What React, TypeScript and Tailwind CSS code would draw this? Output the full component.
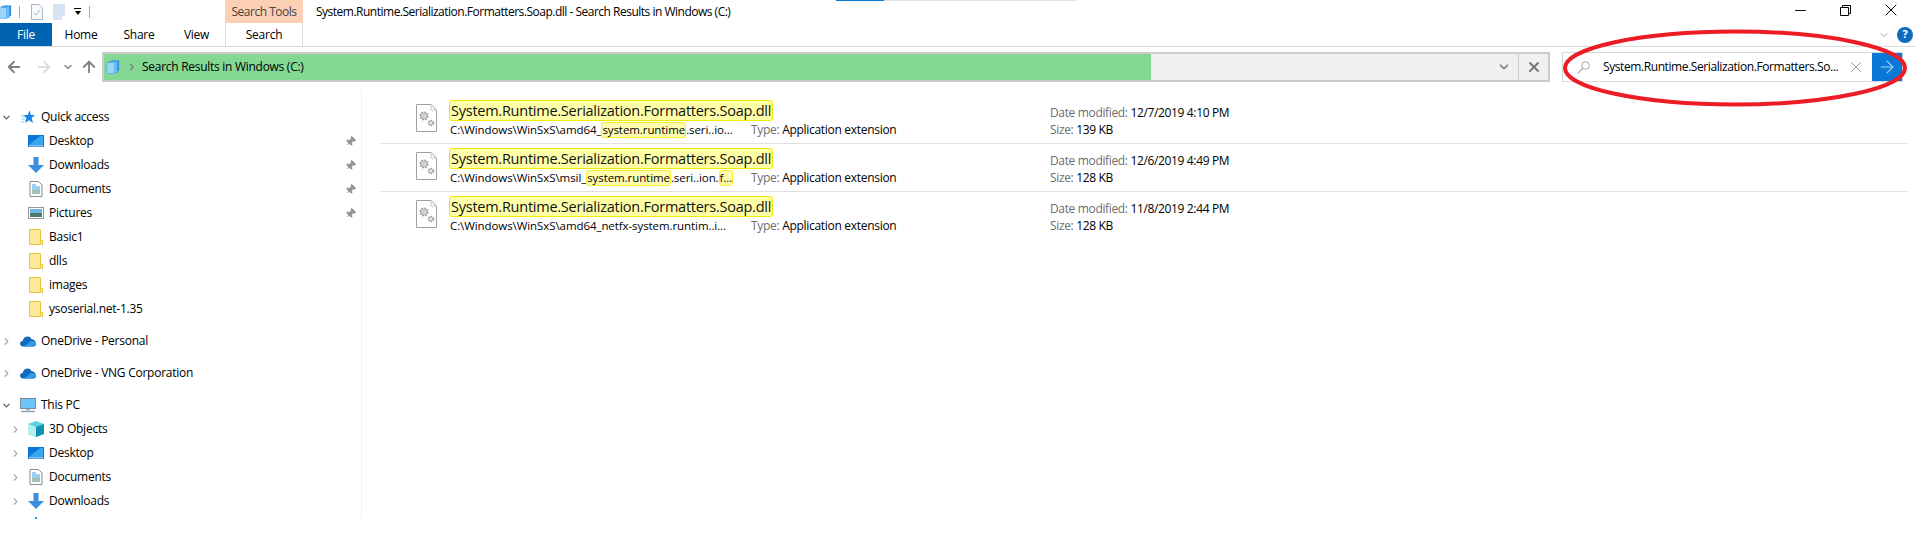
import { ArrowLeft, ArrowRight, ArrowUp, ChevronDown, ChevronRight, Minus, Pin, X } from "lucide-react";
import type { ReactNode } from "react";

const FONT = "font-['Open_Sans','Noto_Sans',sans-serif]";

function LibraryIcon({ size = 14 }: { size?: number }) {
  return (
    <svg width={size} height={size} viewBox="0 0 16 16">
      <rect x="6" y="0.5" width="9" height="12" fill="#2f8fe0" />
      <rect x="4" y="1.5" width="9" height="13" fill="#6fc0f5" stroke="#2f8fe0" strokeWidth="0.6" />
      <rect x="1" y="3" width="9" height="12.5" fill="#9bd6fa" stroke="#3d9be8" strokeWidth="0.6" />
    </svg>
  );
}

function FolderIcon() {
  return (
    <svg width="14" height="16" viewBox="0 0 14 16">
      <path d="M0.5 0.5H11.5V11.5H13.5V15.5H0.5Z" fill="#fde89a" stroke="#eac544" />
      <path d="M11.5 11.5H13.5V15.5H11.5Z" fill="#fff3c4" stroke="#eac544" />
    </svg>
  );
}

function DesktopIcon() {
  return (
    <svg width="16" height="12" viewBox="0 0 16 12">
      <rect width="16" height="12" fill="#0a78d7" />
      <path d="M1 10L12 1H15V10Z" fill="#39a7f0" />
      <rect x="1" y="10.5" width="14" height="0.8" fill="#ffffff" />
    </svg>
  );
}

function DownloadsIcon() {
  return (
    <svg width="16" height="16" viewBox="0 0 16 16">
      <path d="M5.5 0H10.5V8H16L8 16L0 8H5.5Z" fill="#3c8fe0" />
    </svg>
  );
}

function DocumentsIcon() {
  return (
    <svg width="14" height="16" viewBox="0 0 14 16">
      <path d="M1 0.5H9.5L13 4V15.5H1Z" fill="#ffffff" stroke="#8a8a8a" />
      <path d="M3 4H7M3 6H11M3 8H11" stroke="#3f9ee8" />
      <path d="M3 10H11M3 12H11" stroke="#4a7a7a" />
    </svg>
  );
}

function PicturesIcon() {
  return (
    <svg width="16" height="12" viewBox="0 0 16 12">
      <rect x="0.5" y="0.5" width="15" height="11" fill="#ffffff" stroke="#999999" />
      <rect x="2" y="2" width="12" height="4" fill="#6eb6e8" />
      <rect x="2" y="6" width="12" height="4" fill="#4f7a66" />
    </svg>
  );
}

function StarIcon() {
  return (
    <svg width="14" height="14" viewBox="0 0 14 14">
      <path d="M8.5 0.5L10 5H14L10.7 8L12 13L8 10.2L4 13L5.3 8L2 5H6.8Z" fill="#1c86e0" />
      <path d="M0 6H4M1 9H4M0 12H3" stroke="#7cc3f5" />
    </svg>
  );
}

function CloudIcon() {
  return (
    <svg width="16" height="11" viewBox="0 0 16 11">
      <path d="M3 10.5C1 10.5 0 9 0 7.6C0 6 1.2 5 2.6 5C3.2 2.4 5 0.5 7.5 0.5C9.6 0.5 11 1.6 11.6 3.2C13.8 3.2 16 5 16 7.5C16 9.4 15 10.5 13.4 10.5Z" fill="#0f6cbd" />
      <path d="M4 10.5L10.5 5.2C12.4 4.6 16 5.4 16 8C16 9.8 15 10.5 13.4 10.5Z" fill="#2f9be8" />
    </svg>
  );
}

function PcIcon() {
  return (
    <svg width="16" height="15" viewBox="0 0 16 15">
      <rect x="0.5" y="0.5" width="15" height="10" fill="#6cc3f5" stroke="#7a8a99" />
      <path d="M6 11H10V12.5H6Z" fill="#a9b6c2" />
      <path d="M1 13.5H15" stroke="#8fa3b5" strokeWidth="1.5" />
    </svg>
  );
}

function CubeIcon() {
  return (
    <svg width="16" height="16" viewBox="0 0 16 16">
      <path d="M8 0L16 3V13L8 16L0 13V3Z" fill="#5fd3e0" />
      <path d="M0 3L8 6V16L0 13Z" fill="#b5eef0" />
      <path d="M8 6L16 3V13L8 16Z" fill="#1590b5" />
    </svg>
  );
}

function MusicIcon() {
  return (
    <svg width="16" height="16" viewBox="0 0 16 16">
      <rect x="7" y="0" width="2" height="12" fill="#1c9af0" />
      <circle cx="5.5" cy="12" r="3.5" fill="#1c9af0" />
    </svg>
  );
}

function TreeRow({
  icon,
  label,
  arrow,
  indent,
  pinned,
}: {
  icon: ReactNode;
  label?: string;
  arrow?: "open" | "closed";
  indent?: boolean;
  pinned?: boolean;
}) {
  return (
    <div className="flex h-6 items-center">
      <div className={`flex shrink-0 justify-center ${indent ? "w-[28px] pl-[2px]" : "w-[13px]"}`}>
        {arrow === "open" && <ChevronDown size={11} strokeWidth={2.5} className="text-[#555555]" />}
        {arrow === "closed" && <ChevronRight size={11} strokeWidth={2.5} className="text-[#a6a6a6]" />}
      </div>
      <div className={`flex h-4 w-4 shrink-0 items-center justify-center ${indent ? "" : "ml-[7px]"}`}>{icon}</div>
      {label && <span className="ml-[5px] whitespace-nowrap text-[12px] tracking-[-0.25px] text-black">{label}</span>}
      {pinned && (
        <Pin size={11} className="ml-auto mr-[5px] rotate-45 fill-[#8d979f] text-[#8d979f]" />
      )}
    </div>
  );
}

function Sidebar() {
  return (
    <div className="h-[430px] w-[362px] shrink-0 overflow-hidden border-r border-[#f0f0f0] pt-[16px]">
      <TreeRow arrow="open" icon={<StarIcon />} label="Quick access" />
      <TreeRow indent icon={<DesktopIcon />} label="Desktop" pinned />
      <TreeRow indent icon={<DownloadsIcon />} label="Downloads" pinned />
      <TreeRow indent icon={<DocumentsIcon />} label="Documents" pinned />
      <TreeRow indent icon={<PicturesIcon />} label="Pictures" pinned />
      <TreeRow indent icon={<FolderIcon />} label="Basic1" />
      <TreeRow indent icon={<FolderIcon />} label="dlls" />
      <TreeRow indent icon={<FolderIcon />} label="images" />
      <TreeRow indent icon={<FolderIcon />} label="ysoserial.net-1.35" />
      <div className="mt-2">
        <TreeRow arrow="closed" icon={<CloudIcon />} label="OneDrive - Personal" />
      </div>
      <div className="mt-2">
        <TreeRow arrow="closed" icon={<CloudIcon />} label="OneDrive - VNG Corporation" />
      </div>
      <div className="mt-2">
        <TreeRow arrow="open" icon={<PcIcon />} label="This PC" />
      </div>
      <TreeRow indent arrow="closed" icon={<CubeIcon />} label="3D Objects" />
      <TreeRow indent arrow="closed" icon={<DesktopIcon />} label="Desktop" />
      <TreeRow indent arrow="closed" icon={<DocumentsIcon />} label="Documents" />
      <TreeRow indent arrow="closed" icon={<DownloadsIcon />} label="Downloads" />
      {/* next row is cut by the window edge, only the top of its icon shows */}
      <TreeRow indent icon={<MusicIcon />} />
    </div>
  );
}

function Hit({ children }: { children: ReactNode }) {
  return <span className="rounded-[3px] border border-[#f5ee2a] bg-[#fffcb0]">{children}</span>;
}

const RESULTS = [
  {
    path: (
      <>
        C:\Windows\WinSxS\amd64_<Hit>system.runtime</Hit>.seri..io...
      </>
    ),
    date: "12/7/2019 4:10 PM",
    size: "139 KB",
  },
  {
    path: (
      <>
        C:\Windows\WinSxS\msil_<Hit>system.runtime</Hit>.seri..ion.<Hit>f...</Hit>
      </>
    ),
    date: "12/6/2019 4:49 PM",
    size: "128 KB",
  },
  {
    path: <>C:\Windows\WinSxS\amd64_netfx-system.runtim..i...</>,
    date: "11/8/2019 2:44 PM",
    size: "128 KB",
  },
];

function ResultRow({ path, date, size, last }: { path: ReactNode; date: string; size: string; last: boolean }) {
  return (
    <div className={`flex h-12 items-start pl-[35px] ${last ? "" : "border-b border-[#e0e0e0]"}`}>
      <svg width="21" height="28" viewBox="0 0 21 28" className="mt-[8px] shrink-0">
        <path d="M0.5 0.5H15L20.5 6V27.5H0.5Z" fill="#ffffff" stroke="#a0a0a0" />
        <path d="M15 0.5V6H20.5" fill="none" stroke="#c8c8c8" />
        <circle cx="8" cy="12" r="3.6" fill="#d2d2d2" stroke="#9a9a9a" strokeWidth="2" strokeDasharray="1.6 1.2" />
        <circle cx="15" cy="19" r="2.4" fill="#e4e4e4" stroke="#8f8f8f" strokeWidth="1.6" strokeDasharray="1.4 1" />
      </svg>
      <div className="ml-[12px] w-[302px] shrink-0 pt-[4px]">
        <div className="flex h-[21px] items-center">
          <span className="rounded-[3px] border border-[#f2ea00] bg-[#ffffa8] px-[1px] text-[14.5px] leading-[19px] tracking-[-0.25px] whitespace-nowrap text-[#111111]">
            System.Runtime.Serialization.Formatters.Soap.dll
          </span>
        </div>
        <div className="ml-[1px] flex h-[17px] items-center whitespace-pre text-[11.5px] leading-[14px] tracking-[-0.08px] text-black">
          {path}
        </div>
      </div>
      <div className="w-[299px] shrink-0 pt-[25px] text-[12px] leading-[17px] tracking-[-0.3px]">
        <span className="text-[#6d6d6d]">Type:</span> <span className="text-black">Application extension</span>
      </div>
      <div className="pt-[8px] text-[12px] leading-[17px] tracking-[-0.35px]">
        <div>
          <span className="text-[#6d6d6d]">Date modified:</span> <span className="text-black">{date}</span>
        </div>
        <div>
          <span className="text-[#6d6d6d]">Size:</span> <span className="text-black">{size}</span>
        </div>
      </div>
    </div>
  );
}

export default function App() {
  return (
    <div className={`relative h-[558px] w-[1916px] overflow-hidden bg-white ${FONT}`}>
      {/* progress strip at the very top of the capture */}
      <div className="absolute left-[836px] top-0 flex h-px w-[241px] bg-[#e3e3e3]">
        <div className="h-px w-12 bg-[#0a78d7]" />
      </div>

      {/* title bar */}
      <div className="flex h-[23px] items-center">
        <div className="flex w-[225px] items-center">
          <div className="-ml-[2px]">
            <LibraryIcon size={14} />
          </div>
          <div className="ml-[7px] h-3 w-px bg-[#aaaaaa]" />
          <svg width="12" height="16" viewBox="0 0 12 16" className="ml-[11px]">
            <path d="M0.5 0.5H8L11.5 4V15.5H0.5Z" fill="#f7f9fc" stroke="#a9b8cc" />
            <path d="M3 9L5 11L9 6" stroke="#a9b8cc" fill="none" />
          </svg>
          <svg width="12" height="16" viewBox="0 0 12 16" className="ml-[10px]">
            <path d="M0 0H12V12H9V16H0Z" fill="#d7e2f2" />
          </svg>
          <div className="ml-[9px] flex flex-col items-center">
            <div className="h-px w-[7px] bg-black" />
            <div className="mt-[2px] h-0 w-0 border-x-[3.5px] border-t-[4px] border-x-transparent border-t-black" />
          </div>
          <div className="ml-[8px] h-3 w-px bg-[#aaaaaa]" />
        </div>
        <div className="flex h-full w-[78px] items-center justify-center bg-[#fdcfb5] text-[12px] tracking-[-0.5px] text-[#444444]">
          Search Tools
        </div>
        <span className="ml-[13px] text-[12px] tracking-[-0.5px] text-black">
          System.Runtime.Serialization.Formatters.Soap.dll - Search Results in Windows (C:)
        </span>
        <div className="-mt-[3px] ml-auto flex items-center">
          <Minus size={17} strokeWidth={1.3} className="mr-[31px] text-black" />
          <svg width="11" height="11" viewBox="0 0 11 11" className="mr-[30px]">
            <path d="M0.5 2.5H8.5V10.5H0.5ZM2.5 2.5V0.5H10.5V8.5H8.5" fill="none" stroke="#000000" />
          </svg>
          <X size={20} strokeWidth={1.2} className="mr-[15px] text-black" />
        </div>
      </div>

      {/* ribbon tabs */}
      <div className="flex h-[24px] items-center border-b border-[#dadbdc] text-[12px] tracking-[-0.25px] text-black">
        <div className="flex h-[23px] w-[52px] items-center justify-center bg-[#0063b1] text-white">File</div>
        <div className="flex w-[58px] justify-center">Home</div>
        <div className="flex w-[58px] justify-center">Share</div>
        <div className="flex w-[57px] justify-center">View</div>
        <div className="flex h-[23px] w-[78px] items-center justify-center border-x border-[#dadbdc]">Search</div>
        <div className="ml-auto flex items-center">
          <ChevronDown size={12} className="mr-[7px] text-[#a8a8a8]" />
          <div className="mr-[3px] flex h-4 w-4 items-center justify-center rounded-full bg-[#0f6cbd] text-[11px] font-bold text-white">
            ?
          </div>
        </div>
      </div>

      {/* address row */}
      <div className="box-content flex h-[30px] items-center pt-[5px]">
        <div className="flex w-[102px] shrink-0 items-center pl-[5px]">
          <ArrowLeft size={18} strokeWidth={2.4} className="text-[#808080]" />
          <ArrowRight size={18} strokeWidth={2.4} className="ml-[12px] text-[#dddddd]" />
          <ChevronDown size={12} strokeWidth={3} className="ml-[9px] text-[#8a8a8a]" />
          <ArrowUp size={18} strokeWidth={2.4} className="ml-[6px] text-[#808080]" />
        </div>
        <div className="flex h-[30px] w-[1448px] shrink-0 border-2 border-[#cccccc] bg-[#f0f0f0]">
          <div className="flex w-[1047px] items-center bg-[#84d894] pl-[2px]">
            <LibraryIcon />
            <ChevronRight size={10} strokeWidth={3} className="ml-[7px] text-[#6f7f73]" />
            <span className="ml-[5px] text-[12px] tracking-[-0.28px] text-black">Search Results in Windows (C:)</span>
          </div>
          <div className="flex flex-1 items-center justify-end">
            <ChevronDown size={14} strokeWidth={3} className="mr-[7px] text-[#808080]" />
            <div className="flex h-full w-[30px] items-center justify-center border-l border-[#cccccc]">
              <X size={16} strokeWidth={3} className="text-[#777777]" />
            </div>
          </div>
        </div>
        <div className="ml-[12px] flex h-[30px] w-[341px] shrink-0 items-center border border-[#d9d9d9] bg-white">
          <svg width="13" height="13" viewBox="0 0 13 13" className="ml-[14px]">
            <circle cx="8.5" cy="4.5" r="3.8" fill="none" stroke="#a5a5a5" />
            <path d="M5.8 7.2L0.7 12.3" stroke="#a5a5a5" strokeWidth="1.2" />
          </svg>
          <span className="ml-[13px] whitespace-nowrap text-[12px] tracking-[-0.41px] text-black">
            System.Runtime.Serialization.Formatters.So...
          </span>
          <X size={18} strokeWidth={1} className="ml-[9px] text-[#777777]" />
          <div className="ml-auto flex h-full w-[30px] items-center justify-center bg-[#0a78d7]">
            <ArrowRight size={20} strokeWidth={1.3} className="text-[#a8d4f5]" />
          </div>
        </div>
      </div>

      {/* body */}
      <div className="mt-[7px] flex">
        <Sidebar />
        <div className="w-[1554px] pl-[19px]">
          <div className="w-[1526px] pt-[7px]">
            {RESULTS.map((r, i) => (
              <ResultRow key={r.date} path={r.path} date={r.date} size={r.size} last={i === RESULTS.length - 1} />
            ))}
          </div>
        </div>
      </div>

      {/* red marker around the search box */}
      <svg width="352" height="84" viewBox="0 0 352 84" className="pointer-events-none absolute left-[1559px] top-[27px]">
        <ellipse cx="176" cy="41" rx="170" ry="36.5" fill="none" stroke="#ed1c24" strokeWidth="4" />
      </svg>
    </div>
  );
}
